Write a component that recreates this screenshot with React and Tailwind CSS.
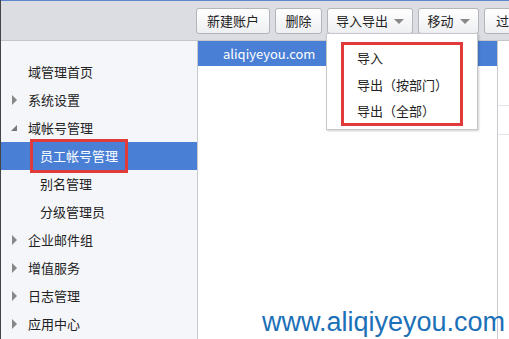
const font = { fontFamily: '"Noto Sans CJK SC", "DejaVu Sans", sans-serif' };

function Caret() {
  return <span className="ml-[6px] inline-block w-0 h-0 border-l-[5px] border-r-[5px] border-t-[5px] border-l-transparent border-r-transparent border-t-[#888]" />;
}

function Btn({ children, w, caret }) {
  return (
    <div
      className={`${w} h-[26px] flex items-center justify-center rounded-[3px] border border-[#b3b5ba] bg-gradient-to-b from-white to-[#eeeff2] text-[13px] text-[#222] shrink-0`}
    >
      {children}
      {caret && <Caret />}
    </div>
  );
}

function NavItem({ label, arrow, child, active }) {
  return (
    <div className={`h-[28px] flex items-center text-[13px] ${active ? 'bg-[#4a7fd6] text-white' : 'text-[#222]'}`}>
      <div className={`${child ? 'w-[39px]' : 'w-[27px]'} shrink-0 flex justify-center pl-[3px]`}>
        {arrow === 'right' && (
          <span className="inline-block w-0 h-0 border-t-[5px] border-b-[5px] border-l-[5px] border-t-transparent border-b-transparent border-l-[#888] -ml-[4px]" />
        )}
        {arrow === 'down' && (
          <span className="inline-block w-0 h-0 border-b-[6px] border-l-[6px] border-l-transparent border-b-[#777] -ml-[4px]" />
        )}
      </div>
      <span className={active ? 'outline-[3px] outline outline-[#e03a3a] px-[7px] py-[4px] -ml-[7px]' : ''}>{label}</span>
    </div>
  );
}

export default function App() {
  return (
    <div className="w-[509px] h-[339px] relative overflow-hidden bg-white border-l border-l-[#444]" style={font}>
      <div className="h-[1px] bg-[#5b86cf]" />
      <div className="h-[40px] bg-[#dcdde2] border-b border-[#c4c6cb] flex items-start pt-[7px] pl-[195px] gap-[5px]">
        <Btn w="w-[74px]">新建账户</Btn>
        <Btn w="w-[47px]">删除</Btn>
        <Btn w="w-[86px]" caret>导入导出</Btn>
        <Btn w="w-[61px]" caret>移动</Btn>
        <Btn w="w-[50px]">过滤</Btn>
      </div>
      <div className="flex h-[298px]">
        <div className="w-[197px] shrink-0 bg-[#f5f6fa] border-r border-r-[#c8cacf] pt-[17px]">
          <NavItem label="域管理首页" />
          <NavItem label="系统设置" arrow="right" />
          <NavItem label="域帐号管理" arrow="down" />
          <NavItem label="员工帐号管理" child active />
          <NavItem label="别名管理" child />
          <NavItem label="分级管理员" child />
          <NavItem label="企业邮件组" arrow="right" />
          <NavItem label="增值服务" arrow="right" />
          <NavItem label="日志管理" arrow="right" />
          <NavItem label="应用中心" arrow="right" />
        </div>
        <div className="w-[300px] shrink-0 border-r border-[#c8cacf]">
          <div className="h-[25px] bg-[#4a7fd6] text-white text-[13px] flex items-center pl-[25px]">
            aliqiyeyou.com
          </div>
        </div>
        <div className="flex-1 flex flex-col">
          <div className="h-[65px] border-b border-[#e2e3e6]" />
          <div className="h-[29px] border-b border-[#e2e3e6]" />
        </div>
      </div>
      <div className="absolute left-[325px] top-[33px] w-[152px] h-[97px] bg-white border border-[#c6c7cb] shadow-[1px_1px_2px_rgba(0,0,0,0.2)] pt-[8px] pl-[14px]">
        <div className="w-[122px] h-[84px] border-[3px] border-[#e03a3a] flex flex-col pl-[13px] text-[13px] text-[#222]">
          <div className="h-[26px] flex items-center">导入</div>
          <div className="h-[27px] flex items-center">导出（按部门）</div>
          <div className="h-[25px] flex items-center">导出（全部）</div>
        </div>
      </div>
      <div
        className="absolute left-[261px] top-[306px] text-[27px] leading-[32px] text-[#1b70b8]"
        style={{ fontFamily: '"Liberation Sans", Arial, sans-serif' }}
      >
        www.aliqiyeyou.com
      </div>
    </div>
  );
}
